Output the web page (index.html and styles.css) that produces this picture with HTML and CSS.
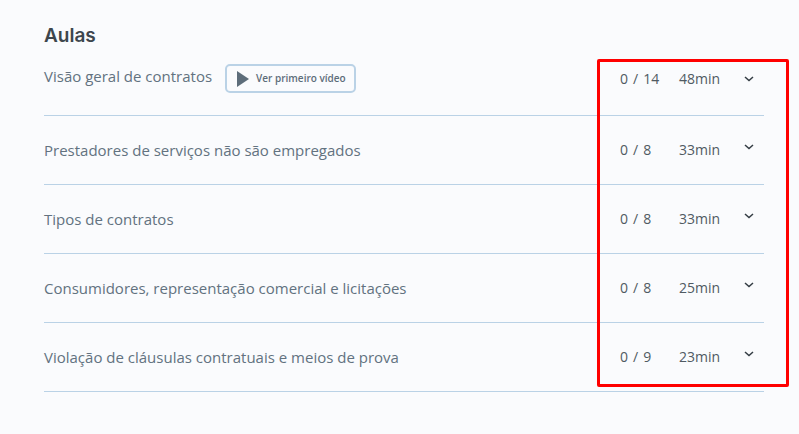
FILE: index.html
```html
<!DOCTYPE html>
<html lang="pt-BR">
<head>
    <meta charset="UTF-8">
    <meta name="viewport" content="width=device-width, initial-scale=1.0">
    <title>Aulas</title>
    <link rel="stylesheet" href="styles.css">
</head>
<body>
    <main class="lessons">
        <h1 class="lessons-title">Aulas</h1>

        <div class="lessons-body">
            <ul class="lesson-list">
                <li class="lesson lesson-first">
                    <div class="lesson-name">
                        <span>Visão geral de contratos</span>
                        <button type="button" class="play-button">
                            <svg class="play-icon" viewBox="0 0 12 16" aria-hidden="true"><path d="M0 0L12 8L0 16Z"/></svg>
                            Ver primeiro vídeo
                        </button>
                    </div>
                    <span class="lesson-count"><span>0</span><span>/</span><span>14</span></span>
                    <span class="lesson-time">48min</span>
                    <button type="button" class="toggle" aria-label="Expandir">
                        <svg class="chevron" viewBox="0 0 10 6" aria-hidden="true"><path d="M1 1L5 4.6L9 1"/></svg>
                    </button>
                </li>
                <li class="lesson">
                    <div class="lesson-name">Prestadores de serviços não são empregados</div>
                    <span class="lesson-count"><span>0</span><span>/</span><span>8</span></span>
                    <span class="lesson-time">33min</span>
                    <button type="button" class="toggle" aria-label="Expandir">
                        <svg class="chevron" viewBox="0 0 10 6" aria-hidden="true"><path d="M1 1L5 4.6L9 1"/></svg>
                    </button>
                </li>
                <li class="lesson">
                    <div class="lesson-name">Tipos de contratos</div>
                    <span class="lesson-count"><span>0</span><span>/</span><span>8</span></span>
                    <span class="lesson-time">33min</span>
                    <button type="button" class="toggle" aria-label="Expandir">
                        <svg class="chevron" viewBox="0 0 10 6" aria-hidden="true"><path d="M1 1L5 4.6L9 1"/></svg>
                    </button>
                </li>
                <li class="lesson">
                    <div class="lesson-name">Consumidores, representação comercial e licitações</div>
                    <span class="lesson-count"><span>0</span><span>/</span><span>8</span></span>
                    <span class="lesson-time">25min</span>
                    <button type="button" class="toggle" aria-label="Expandir">
                        <svg class="chevron" viewBox="0 0 10 6" aria-hidden="true"><path d="M1 1L5 4.6L9 1"/></svg>
                    </button>
                </li>
                <li class="lesson">
                    <div class="lesson-name">Violação de cláusulas contratuais e meios de prova</div>
                    <span class="lesson-count"><span>0</span><span>/</span><span>9</span></span>
                    <span class="lesson-time">23min</span>
                    <button type="button" class="toggle" aria-label="Expandir">
                        <svg class="chevron" viewBox="0 0 10 6" aria-hidden="true"><path d="M1 1L5 4.6L9 1"/></svg>
                    </button>
                </li>
            </ul>
            <div class="highlight"></div>
        </div>
    </main>
</body>
</html>
```

FILE: styles.css
```css
* {
    box-sizing: border-box;
}

body {
    margin: 0;
    font-family: "Open Sans", sans-serif;
    background-color: #fafbfd;
    color: #627280;
}

.lessons {
    padding: 24px 35px 40px 44px;
}

.lessons-title {
    margin: 0;
    font-family: Inter, sans-serif;
    font-size: 19px;
    font-weight: 600;
    line-height: 24px;
    color: #3d464d;
}

.lessons-body {
    position: relative;
}

.lesson-list {
    list-style: none;
    margin: 0;
    padding: 0;
}

.lesson {
    display: grid;
    grid-template-columns: 1fr 59px 54px 31px;
    align-items: center;
    padding: 22px 0;
    border-bottom: 1px solid #bad2e6;
    font-size: 14px;
    line-height: 24px;
}

.lesson-first {
    padding: 16px 0 22px;
}

.lesson-name {
    display: flex;
    align-items: flex-start;
    gap: 13px;
    font-size: 15px;
}

.lesson-count,
.lesson-time {
    color: #505a62;
}

.lesson-count {
    display: flex;
    gap: 5px;
}

.play-button {
    display: flex;
    align-items: center;
    gap: 7px;
    padding: 4px 8px 4px 10px;
    border: 2px solid #bad2e6;
    border-radius: 5px;
    background: none;
    color: #5d6d7a;
    font-family: inherit;
    font-size: 10px;
    font-weight: 600;
    line-height: 17px;
    cursor: pointer;
}

.play-icon {
    width: 12px;
    height: 16px;
    fill: #5d6d7a;
}

.toggle {
    display: flex;
    justify-content: center;
    padding: 0 0 6px;
    border: none;
    background: none;
    cursor: pointer;
}

.lesson-first .toggle {
    padding: 0;
}

.chevron {
    width: 10px;
    height: 6px;
    fill: none;
    stroke: #343d44;
    stroke-width: 1.5;
}

/* red frame over the progress columns */
.highlight {
    position: absolute;
    top: 11px;
    right: -25px;
    bottom: 5px;
    width: 192px;
    border: 3px solid #ff0000;
    border-radius: 2px;
    pointer-events: none;
}
```
